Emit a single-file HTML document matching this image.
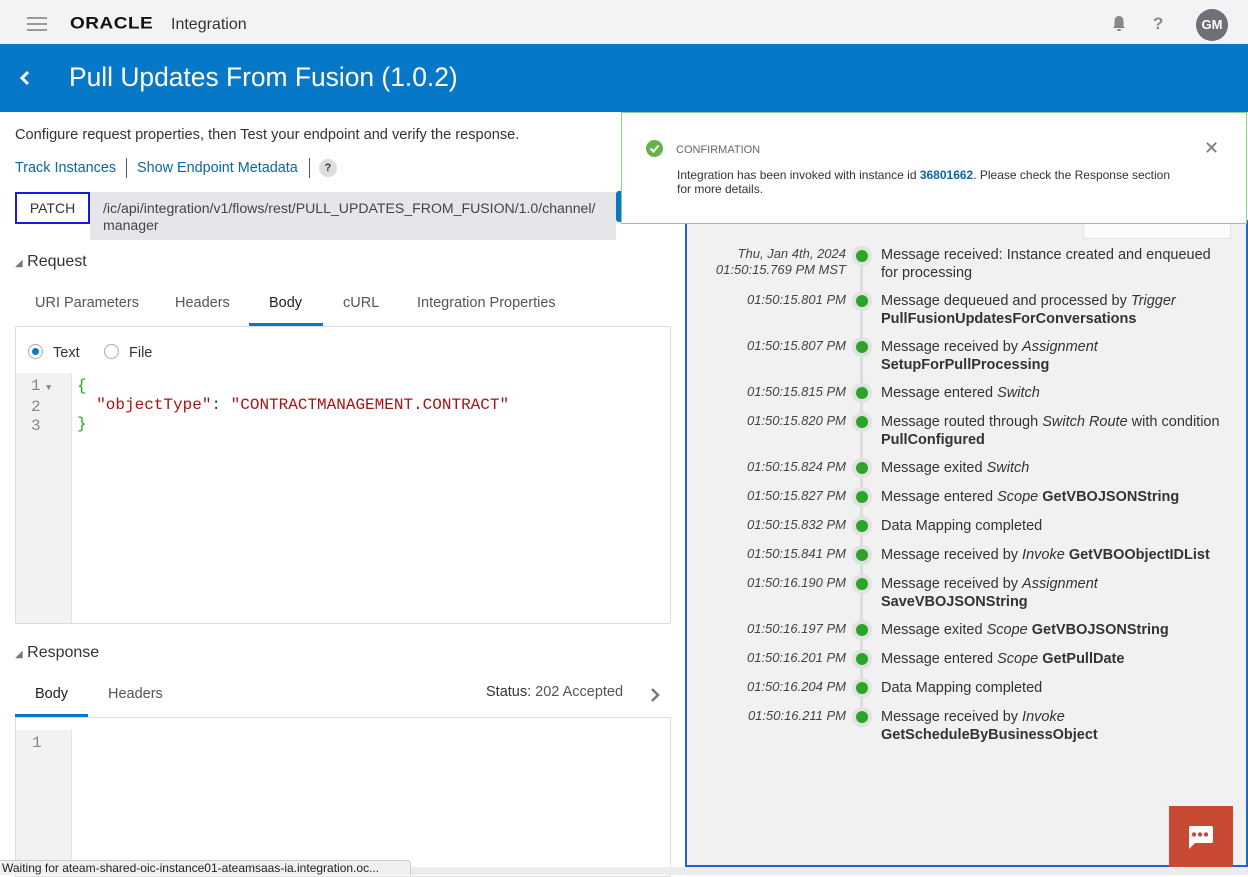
<!DOCTYPE html>
<html><head><meta charset="utf-8"><style>
*{margin:0;padding:0;box-sizing:border-box}
body{width:1248px;height:875px;overflow:hidden;background:#fff;font-family:"Liberation Sans",sans-serif;position:relative;color:#333}
.a{position:absolute;white-space:nowrap}
.tl{position:absolute;left:686px;width:160px;text-align:right;font-style:italic;font-size:13px;color:#444;line-height:16px}
.tx{position:absolute;left:881px;font-size:14.5px;color:#333;line-height:18px}
.dot{position:absolute;left:852px;width:20px;height:20px;border-radius:50%;background:#e2e2e2}
.dot:after{content:"";position:absolute;left:4px;top:4px;width:12px;height:12px;border-radius:50%;background:#2aa52a}
b{color:#333}
</style></head><body>
<div class="a" style="left:0;top:0;width:1248px;height:44px;background:#f2f3f5"></div>
<div class="a" style="left:27px;top:17px;width:20px;height:2px;background:#999"></div>
<div class="a" style="left:27px;top:23px;width:20px;height:2px;background:#999"></div>
<div class="a" style="left:27px;top:29px;width:20px;height:2px;background:#999"></div>
<div class="a" style="left:70px;top:13px;font-size:19px;font-weight:bold;letter-spacing:0.5px;color:#111;transform:scaleY(0.85)">ORACLE</div>
<div class="a" style="left:171px;top:16px;font-size:16px;color:#333">Integration</div>
<svg class="a" style="left:1111px;top:15px" width="16" height="18" viewBox="0 0 16 18"><path d="M8 1c-3 0-4.5 2.5-4.5 5v5L2 13h12l-1.5-2V6C12.5 3.5 11 1 8 1z" fill="#888"/><rect x="6" y="14" width="4" height="2" rx="1" fill="#888"/></svg>
<div class="a" style="left:1153px;top:14px;font-size:17px;font-weight:bold;color:#888">?</div>
<div class="a" style="left:1196px;top:9px;width:32px;height:32px;border-radius:50%;background:#6f6f78;color:#fff;font-size:13px;font-weight:bold;text-align:center;line-height:32px">GM</div>
<div class="a" style="left:0;top:44px;width:1248px;height:68px;background:#0777c8"></div>
<svg class="a" style="left:19px;top:70px" width="12" height="16" viewBox="0 0 12 16"><path d="M9 2L3 8l6 6" stroke="#fff" stroke-width="3" fill="none"/></svg>
<div class="a" style="left:69px;top:62px;font-size:26.4px;color:#fff">Pull Updates From Fusion (1.0.2)</div>
<div class="a" style="left:15px;top:127px;font-size:14.6px;color:#333">Configure request properties, then Test your endpoint and verify the response.</div>
<div class="a" style="left:15px;top:160px;font-size:14.4px;color:#0b66a8">Track Instances</div>
<div class="a" style="left:126px;top:158px;width:1px;height:20px;background:#555"></div>
<div class="a" style="left:137px;top:160px;font-size:14.4px;color:#0b66a8">Show Endpoint Metadata</div>
<div class="a" style="left:309px;top:158px;width:1px;height:20px;background:#555"></div>
<div class="a" style="left:319px;top:159px;width:18px;height:18px;border-radius:50%;background:#ddd;font-size:11px;font-weight:bold;text-align:center;line-height:18px;color:#333">?</div>
<div class="a" style="left:90px;top:192px;width:526px;height:48px;background:#e4e6e9"></div>
<div class="a" style="left:616px;top:191px;width:6px;height:31px;background:#0777c8;border-radius:3px 0 0 3px"></div>
<div class="a" style="left:15px;top:192px;width:75px;height:32px;border:2px solid #1a1ae6;background:#fff;font-size:14px;text-align:center;line-height:28px;color:#333">PATCH</div>
<div class="a" style="left:103px;top:200px;font-size:14.1px;line-height:17px;color:#444">/ic/api/integration/v1/flows/rest/PULL_UPDATES_FROM_FUSION/1.0/channel/<br>manager</div>
<div class="a" style="left:15px;top:253px;font-size:16px;color:#333"><span style="font-size:10px;color:#777">◢</span> Request</div>
<div class="a" style="left:35px;top:295px;font-size:14.5px;color:#555">URI Parameters</div>
<div class="a" style="left:175px;top:295px;font-size:14.5px;color:#555">Headers</div>
<div class="a" style="left:269px;top:295px;font-size:14.5px;color:#222">Body</div>
<div class="a" style="left:343px;top:295px;font-size:14.5px;color:#555">cURL</div>
<div class="a" style="left:417px;top:295px;font-size:14.5px;color:#555">Integration Properties</div>
<div class="a" style="left:249px;top:323px;width:74px;height:3px;background:#0777c8"></div>
<div class="a" style="left:15px;top:326px;width:656px;height:298px;border:1px solid #ddd;border-radius:2px"></div>
<div class="a" style="left:28px;top:344px;width:15px;height:15px;border-radius:50%;border:1px solid #aaa;background:#fff"></div>
<div class="a" style="left:32px;top:348px;width:7px;height:7px;border-radius:50%;background:#0777c8"></div>
<div class="a" style="left:53px;top:345px;font-size:14.5px;color:#333">Text</div>
<div class="a" style="left:104px;top:344px;width:15px;height:15px;border-radius:50%;border:1px solid #aaa;background:#fff"></div>
<div class="a" style="left:129px;top:345px;font-size:14.5px;color:#333">File</div>
<div class="a" style="left:16px;top:373px;width:56px;height:250px;background:#f2f2f2;border-right:1px solid #e2e2e2"></div>
<div class="a" style="left:31px;top:377px;font-family:'Liberation Mono',monospace;font-size:16px;line-height:19px;color:#888">1<span style="font-size:9px"> ▼</span><br>2<br>3</div>
<div class="a" style="left:77px;top:377px;font-family:'Liberation Mono',monospace;font-size:16px;line-height:19px;color:#a11;white-space:pre"><span style="color:#2a2">{</span>
  "objectType"<span style="color:#333">:</span> "CONTRACTMANAGEMENT.CONTRACT"
<span style="color:#2a2">}</span></div>
<div class="a" style="left:15px;top:644px;font-size:16px;color:#333"><span style="font-size:10px;color:#777">◢</span> Response</div>
<div class="a" style="left:35px;top:686px;font-size:14.5px;color:#222">Body</div>
<div class="a" style="left:108px;top:686px;font-size:14.5px;color:#555">Headers</div>
<div class="a" style="left:15px;top:714px;width:73px;height:3px;background:#0777c8"></div>
<div class="a" style="left:486px;top:684px;font-size:14.5px;color:#333">Status: <span style="color:#555">202 Accepted</span></div>
<svg class="a" style="left:650px;top:687px" width="10" height="16" viewBox="0 0 10 16"><path d="M2 2l6 6-6 6" stroke="#777" stroke-width="2.5" fill="none"/></svg>
<div class="a" style="left:15px;top:717px;width:656px;height:160px;border:1px solid #ddd"></div>
<div class="a" style="left:16px;top:730px;width:56px;height:140px;background:#f2f2f2;border-right:1px solid #e2e2e2"></div>
<div class="a" style="left:32px;top:734px;font-family:'Liberation Mono',monospace;font-size:16px;color:#888">1</div>
<div class="a" style="left:685px;top:220px;width:563px;height:647px;background:#f1f1f1;border:2px solid #1a66cc;border-top:none"></div>
<div class="a" style="left:1083px;top:220px;width:148px;height:19px;background:#fbfbfb;border:1px solid #e3e3e3"></div>
<div class="a" style="left:860px;top:260px;width:3px;height:460px;background:#ddd"></div>
<div class="tl" style="top:246px">Thu, Jan 4th, 2024<br>01:50:15.769 PM MST</div><div class="dot" style="top:246px"></div><div class="tx" style="top:246px">Message received: Instance created and enqueued<br>for processing</div>
<div class="tl" style="top:292px">01:50:15.801 PM</div><div class="dot" style="top:291px"></div><div class="tx" style="top:292px">Message dequeued and processed by <i>Trigger</i><br><b>PullFusionUpdatesForConversations</b></div>
<div class="tl" style="top:338px">01:50:15.807 PM</div><div class="dot" style="top:337px"></div><div class="tx" style="top:338px">Message received by <i>Assignment</i><br><b>SetupForPullProcessing</b></div>
<div class="tl" style="top:384px">01:50:15.815 PM</div><div class="dot" style="top:383px"></div><div class="tx" style="top:384px">Message entered <i>Switch</i></div>
<div class="tl" style="top:413px">01:50:15.820 PM</div><div class="dot" style="top:412px"></div><div class="tx" style="top:413px">Message routed through <i>Switch Route</i> with condition<br><b>PullConfigured</b></div>
<div class="tl" style="top:459px">01:50:15.824 PM</div><div class="dot" style="top:458px"></div><div class="tx" style="top:459px">Message exited <i>Switch</i></div>
<div class="tl" style="top:488px">01:50:15.827 PM</div><div class="dot" style="top:487px"></div><div class="tx" style="top:488px">Message entered <i>Scope</i> <b>GetVBOJSONString</b></div>
<div class="tl" style="top:517px">01:50:15.832 PM</div><div class="dot" style="top:516px"></div><div class="tx" style="top:517px">Data Mapping completed</div>
<div class="tl" style="top:546px">01:50:15.841 PM</div><div class="dot" style="top:545px"></div><div class="tx" style="top:546px">Message received by <i>Invoke</i> <b>GetVBOObjectIDList</b></div>
<div class="tl" style="top:575px">01:50:16.190 PM</div><div class="dot" style="top:574px"></div><div class="tx" style="top:575px">Message received by <i>Assignment</i><br><b>SaveVBOJSONString</b></div>
<div class="tl" style="top:621px">01:50:16.197 PM</div><div class="dot" style="top:620px"></div><div class="tx" style="top:621px">Message exited <i>Scope</i> <b>GetVBOJSONString</b></div>
<div class="tl" style="top:650px">01:50:16.201 PM</div><div class="dot" style="top:649px"></div><div class="tx" style="top:650px">Message entered <i>Scope</i> <b>GetPullDate</b></div>
<div class="tl" style="top:679px">01:50:16.204 PM</div><div class="dot" style="top:678px"></div><div class="tx" style="top:679px">Data Mapping completed</div>
<div class="tl" style="top:708px">01:50:16.211 PM</div><div class="dot" style="top:707px"></div><div class="tx" style="top:708px">Message received by <i>Invoke</i><br><b>GetScheduleByBusinessObject</b></div>
<div class="a" style="left:621px;top:112px;width:626px;height:112px;background:#fff;border:1px solid #8fcc85"></div>
<div class="a" style="left:646px;top:140px;width:17px;height:17px;border-radius:50%;background:#6ab04c"></div>
<svg class="a" style="left:646px;top:140px" width="17" height="17" viewBox="0 0 17 17"><path d="M4.5 8.5l3 3 5-6" stroke="#fff" stroke-width="2" fill="none"/></svg>
<div class="a" style="left:676px;top:144px;font-size:11px;color:#666">CONFIRMATION</div>
<div class="a" style="left:1204px;top:138px;font-size:18px;color:#777">✕</div>
<div class="a" style="left:677px;top:168px;font-size:12px;line-height:14px;color:#333">Integration has been invoked with instance id <b style="color:#0b66a8">36801662</b>. Please check the Response section<br>for more details.</div>
<div class="a" style="left:1169px;top:806px;width:64px;height:64px;background:#c84a35"></div>
<svg class="a" style="left:1186px;top:825px" width="28" height="26" viewBox="0 0 28 26"><path d="M3 1h22a2 2 0 0 1 2 2v13a2 2 0 0 1-2 2H9l-6 6V3a2 2 0 0 1 2-2z" fill="#fff"/><circle cx="8" cy="9.5" r="2.2" fill="#c84a35"/><circle cx="14" cy="9.5" r="2.2" fill="#c84a35"/><circle cx="20" cy="9.5" r="2.2" fill="#c84a35"/></svg>
<div class="a" style="left:410px;top:867px;width:838px;height:8px;background:#ececec"></div>
<div class="a" style="left:0;top:860px;width:411px;height:15px;background:#eef0f2;border:1px solid #ccc;border-left:none;border-bottom:none;border-radius:0 4px 0 0;font-size:12px;line-height:15px;color:#222;padding-left:2px">Waiting for ateam-shared-oic-instance01-ateamsaas-ia.integration.oc...</div>
</body></html>
